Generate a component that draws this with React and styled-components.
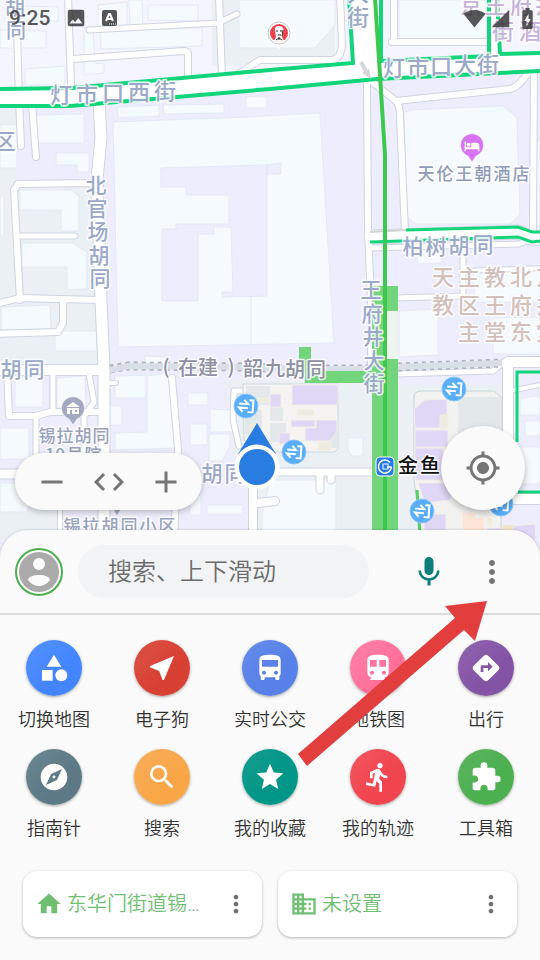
import React from 'react';
import styled, { createGlobalStyle } from 'styled-components';
import {
  MdAdd, MdRemove, MdCode, MdMyLocation, MdMic, MdMoreVert, MdCategory, MdNearMe,
  MdDirectionsBus, MdDirectionsSubway, MdDirections, MdExplore, MdSearch, MdGrade,
  MdDirectionsRun, MdExtension, MdHome, MdDomain, MdImage, MdSignalWifi4Bar,
  MdSignalCellular4Bar, MdBatteryChargingFull, MdHotel,
} from 'react-icons/md';

const GlobalStyle = createGlobalStyle`
  * { box-sizing: border-box; }
  body {
    margin: 0;
    background: #fafafa;
    color: #333;
    font-family: Roboto, "Noto Sans CJK SC", sans-serif;
    font-weight: 350;
  }
  button, input { font: inherit; color: inherit; border: 0; padding: 0; background: none; }
  button { cursor: pointer; }
`;

const Screen = styled.div`
  min-height: 100vh;
  display: flex;
  flex-direction: column;
  overflow: hidden;
`;

const MapArea = styled.section`
  position: relative;
  flex: 1;
  min-height: 320px;
`;

const MapCanvas = styled.svg`
  position: absolute;
  top: 0;
  left: 0;
  width: 100%;
  height: calc(100% + 30px);
`;

const MapText = styled.text`
  font-family: "Noto Sans CJK SC", sans-serif;
  font-weight: 500;
  text-anchor: middle;
  paint-order: stroke;
  stroke: #fff;
  stroke-width: 3px;
  stroke-linejoin: round;
  stroke-opacity: 0.85;
`;

const StatusBar = styled.header`
  position: absolute;
  top: 0;
  left: 0;
  right: 0;
  height: 36px;
  padding: 0 0 0 9px;
  display: flex;
  align-items: center;
  justify-content: space-between;
  color: rgba(50, 50, 50, 0.82);
`;

const StatusGroup = styled.div`
  display: flex;
  align-items: center;
  gap: ${(p) => p.$gap}px;
`;

const Clock = styled.span`
  font-size: 21px;
  font-weight: 500;
`;

const MapControls = styled.div`
  position: absolute;
  left: 15px;
  right: 15px;
  bottom: 20px;
  display: flex;
  justify-content: space-between;
  align-items: flex-end;
`;

const ZoomPill = styled.div`
  display: flex;
  align-items: center;
  justify-content: space-evenly;
  width: 187px;
  height: 57px;
  padding: 0 8px;
  border-radius: 29px;
  background: #fafafa;
  box-shadow: 0 2px 6px rgba(0, 0, 0, 0.25);
`;

const IconButton = styled.button`
  flex: 1;
  display: grid;
  place-items: center;
  color: #757575;
`;

const LocateButton = styled.button`
  display: grid;
  place-items: center;
  width: 84px;
  height: 84px;
  border-radius: 50%;
  background: #fafafa;
  color: #757575;
  box-shadow: 0 3px 7px rgba(0, 0, 0, 0.28);
`;

const Sheet = styled.main`
  position: relative;
  background: #fafafa;
  border-radius: 28px 28px 0 0;
  box-shadow: 0 0 3px rgba(0, 0, 0, 0.2);
`;

const SearchRow = styled.form`
  display: flex;
  align-items: center;
  height: 85px;
  padding: 0 17px 0 15px;
  border-bottom: 2px solid #dcdcdc;
`;

const Avatar = styled.button`
  flex: none;
  display: grid;
  place-items: center;
  width: 48px;
  height: 48px;
  border: 2px solid #4caf50;
  border-radius: 50%;
`;

const SearchInput = styled.input`
  flex: 1;
  min-width: 0;
  height: 53px;
  margin: 0 28px 0 15px;
  padding: 0 30px;
  border-radius: 27px;
  background: #f1f3f4;
  font-size: 24px;
  outline-color: #4caf50;
  &::placeholder { color: #6c6c6c; opacity: 1; }
`;

const ActionButton = styled.button`
  flex: none;
  display: grid;
  place-items: center;
  width: 63px;
  height: 56px;
  color: ${(p) => p.$color};
`;

const ShortcutGrid = styled.nav`
  display: grid;
  grid-template-columns: repeat(5, 1fr);
  row-gap: 14px;
  padding: 25px 0 27px;
`;

const Shortcut = styled.button`
  display: flex;
  flex-direction: column;
  align-items: center;
  gap: 9px;
  color: #333;
  font-size: 18px;
  line-height: 30px;
  white-space: nowrap;
`;

const Badge = styled.span`
  display: grid;
  place-items: center;
  width: 56px;
  height: 56px;
  border-radius: 50%;
  color: #fff;
  background: linear-gradient(135deg, ${(p) => p.$from}, ${(p) => p.$to} 60%);
  box-shadow: 0 1px 3px rgba(0, 0, 0, 0.35);
`;

const Places = styled.div`
  display: grid;
  grid-template-columns: 1fr 1fr;
  gap: 16px;
  padding: 0 23px 23px;
`;

const PlaceCard = styled.div`
  display: flex;
  align-items: center;
  min-width: 0;
  height: 66px;
  padding-left: 12px;
  border-radius: 14px;
  background: #fff;
  box-shadow: 0 1px 3px rgba(0, 0, 0, 0.28);
`;

const PlaceLink = styled.a`
  flex: 1;
  min-width: 0;
  display: flex;
  align-items: center;
  gap: 4px;
  color: #6fbf73;
  font-size: 20px;
  line-height: 30px;
  text-decoration: none;
  svg { flex: none; }
`;

const PlaceName = styled.span`
  width: 136px;
  overflow: hidden;
  text-overflow: ellipsis;
  white-space: nowrap;
`;

const PlaceMenu = styled.button`
  flex: none;
  display: grid;
  place-items: center;
  width: 52px;
  height: 48px;
  color: #6f6f6f;
`;

const Arrow = styled.svg`
  position: absolute;
  top: 70px;
  left: calc(50% + 27px);
  width: 190px;
  height: 167px;
  pointer-events: none;
`;

const roads = [
  ['M17 30L19 100L21 146', 6], ['M32 104L36 157', 6], ['M68 -5L71 84', 6],
  ['M89 30L218 23L237 14', 5], ['M73 59L184 51Q188 51 188 55V80', 6],
  ['M219 -5L222 78', 6], ['M238 74L260 60L333 60Q341 58 342 45L340 -5', 6],
  ['M392 42H487M394 42V-5', 6],
  ['M99 100L101 138L97 180L101 300L104 368V535', 11],
  ['M93 183L18 184L14 190L20 300', 6], ['M20 236H75', 5],
  ['M-5 304L20 298L98 300', 6], ['M63 300V323L58 332L-5 334', 6],
  ['M-5 370H103', 10], ['M7 372L9 416H36L50 412H100', 6],
  ['M53 372V412M89 374L94 402L84 417V455M36 416V455', 5],
  ['M-5 474H104', 9], ['M104 383H116', 4], ['M172 378L178 450L174 540', 6],
  ['M60 505V540', 4],
  ['M367 80L368 230L371 300V380', 6],
  ['M371 81L396 101Q400 105 400 117L405 232', 6],
  ['M396 101L510 89Q519 87 530 70', 6], ['M534 70L533 232', 6],
  ['M371 248L519 244L533 239', 5], ['M396 298L463 296V246', 5], ['M463 271L545 268', 4],
  ['M398 374L493 371L504 362', 5],
  ['M545 362H508V499H545', 10], ['M510 391L545 384', 4],
  ['M258 391H234L233 420L239 446', 5],
  ['M262 472H320L326 472H373M320 475V490M331 475V480', 7],
  ['M253 480V540M258 503L275 501', 8],
  ['M371 237L518 232L532 238H545', 13],
];

const blocks = [
  '24 6 58 7 58 21 24 21', '0 30 46 31 46 48 0 48', '25 69 65 66 65 85 25 85',
  '98 5 127 2 127 26 98 27', '148 5 198 5 198 21 148 20', '129 0 142 0 143 27 130 27',
  '100 31 202 28 202 46 101 49', '84 28 93 31 95 63 104 64 104 73 84 75', '239 0 335 0 335 25 315 48 239 48',
  '36 115 84 114 84 143 36 143', '56 153 89 153 89 172 77 172 77 165 56 165', '0 125 17 125 17 168 0 168',
  '117 107 159 105 159 116 118 118', '163 105 224 104 224 113 164 114', '246 97 267 96 267 108 246 108',
  '113 122 247 117 320 113 334 343 118 347',
  '20 190 71 190 79 196 79 231 61 231 61 210 20 210', '22 243 73 243 87 252 87 289 67 290 67 267 22 267',
  '1 307 50 305 51 329 1 330', '55 331 97 331 97 351 55 351', '0 197 4 197 4 235 0 235', '399 0 487 0 487 38 399 41',
  '404 113 411 110 503 106 517 118 520 214 510 224 415 224 407 216',
  '417 250 442 250 442 263 418 264', '399 311 438 309 438 355 399 357',
  '473 273 540 270 540 302 475 302', '493 318 540 317 540 354 493 354',
  '15 377 43 377 43 407 15 407', '57 378 85 376 86 408 57 408', '0 428 29 428 29 459 0 459',
  '115 376 146 375 146 398 115 398', '147 376 168 373 176 448 115 450 115 433 147 432',
  '108 406 122 406 122 425 109 425', '188 393 208 393 208 405 188 405',
  '210 409 233 410 233 432 210 432', '190 424 207 424 207 445 190 445', '209 434 230 434 230 446 222 461 209 461',
  '207 505 243 505 243 514 207 514', '190 495 201 495 201 515 190 515', '145 356 166 357 166 370 145 370',
  '0 483 28 483 28 512 0 512', '270 480 336 480 336 540 262 540 262 514', '348 438 363 438 363 456 352 456 348 450',
  '520 398 540 396 540 415 520 415', '525 421 540 421 540 436 525 436', '517 447 540 447 540 484 517 484', '535 140 540 140 540 226 535 226',
];

const malls = [
  '292 385 338 385 338 405 292 405', '270 394 281 394 281 407 270 407',
  '291 420 315 420 315 427 291 427', '316 420 337 420 337 431 330 441 305 441 305 428 316 428',
  '279 433 290 433 290 444 279 444', '414 409 425 400 447 399 447 428 415 428',
  '415 430 448 430 448 447 415 447', '415 448 443 448 443 480 415 480',
  '418 483 451 483 451 500 425 503', '424 514 446 514 446 540 424 540',
  '487 528 503 528 503 540 487 540', '513 526 535 524 536 540 513 540',
];

const row = (start, pitch, count) => Array.from({ length: count }, (_, i) => start + pitch * i);

const labels = [
  ['胡同', [15, 16], [8, 31], 20, '#9aa9c9'],
  ['灯市口西街', row(61, 26, 5), row(95, -1, 5), 22, '#9aa9c9'],
  ['区', [5], [141], 21, '#9aa9c9'],
  ['大街', [358, 358], [-7, 17], 22, '#9aa9c9'],
  ['灯市口大街', [394, 418, 441, 465, 488], row(68, -1, 5), 22, '#9aa9c9'],
  ['北官场胡同', row(96, 1, 5), [185, 208, 231, 255, 278], 21, '#9aa9c9'],
  ['柏树胡同', [413, 436, 459, 483], [246, 246, 245, 244], 21, '#9aa9c9'],
  ['王府井大街', [371, 372, 373, 374, 374], [289, 313, 336, 360, 383], 21, '#9aa9c9'],
  ['天伦王朝酒店', row(426, 19, 6), row(174, 0, 6), 17, '#8f9bb9'],
  ['胡同', [11, 34], [369, 369], 21, '#9aa9c9'],
  ['(在建)韶九胡同', [166, 188, 208, 231, 253, 275, 295, 316], [367, 368, 368, 367, 369, 369, 370, 370], 20, '#8d90a3'],
  ['锡拉胡同', row(47, 18, 4), row(436, 0, 4), 17, '#98a2bd'],
  ['10号院', [50, 60, 75, 93], row(455, 0, 4), 17, '#98a2bd'],
  ['锡拉胡同小区', row(72, 19, 6), row(526, 0, 6), 17, '#98a2bd'],
  ['胡同', [212, 235], [473, 473], 21, '#9aa9c9'],
  ['京王府井', row(471, 25, 4), row(5, 0, 4), 22, '#c7b3da'],
  ['街酒店', row(503, 27, 3), row(31, 0, 3), 22, '#c7b3da'],
  ['天主教北京', row(443, 26, 5), row(277, 0, 5), 22, '#d4c0bb'],
  ['教区王府井', row(443, 26, 5), row(305, 0, 5), 22, '#d4c0bb'],
  ['主堂东堂', row(469, 26, 4), row(332, 0, 4), 22, '#d4c0bb'],
  ['金鱼', [408, 430], [466, 466], 20, '#111'],
];

function MapLabel({ label }) {
  const [text, xs, ys, size, color] = label;
  return (
    <MapText fontSize={size} fill={color} x={xs.join(' ')} y={ys.map((y) => y + Math.round(size * 0.36)).join(' ')}>
      {text}
    </MapText>
  );
}

function MetroExit({ x, y }) {
  return (
    <g transform={`translate(${x} ${y})`}>
      <circle r="12" fill="#58aefa" stroke="#8bc6fb" />
      <path d="M-7 -2H2L-2 -6M2 2H-7L-3 6M3 -6H7V6H2" fill="none" stroke="#fff" strokeWidth="2" transform="rotate(4)" />
    </g>
  );
}

function Pin({ x, y, color, children }) {
  return (
    <g transform={`translate(${x} ${y})`}>
      <path d="M0 16L-4 10A11.5 11.5 0 1 1 4 10Z" fill={color} stroke="#fff" strokeOpacity=".6" />
      {children}
    </g>
  );
}

function CityMap() {
  return (
    <MapCanvas viewBox="0 0 540 560" preserveAspectRatio="xMidYMin slice" role="img" aria-label="地图">
      <rect width="540" height="560" fill="#eeedfd" />
      <path d="M0 0H540V54L378 62L270 71L0 89Z" fill="#f4f5fe" />
      <path d="M212 0H240V48H315L335 25V58H260L240 66H212ZM0 110H16V180H0ZM0 180H92L97 366H0ZM225 380H372V540H258L240 460L232 450ZM336 475H372V540H336ZM398 385H503V540H398ZM0 510H60V540H0Z" fill="#ebf0f5" />
      <g fill="#f5faff" stroke="#e3e9f6">{blocks.map((p) => <polygon key={p} points={p} />)}</g>
      <path d="M161 168L267 165V296L222 297V292H228L233 293L231 227H214V234H198V301H162V229H176V224H229V195H186V187H161ZM267 165L281 163V174H267ZM251 297V345" fill="#eeedfd" stroke="#e3e7f6" />

      <g fill="none" stroke="#cfd3e2" strokeLinecap="round" strokeLinejoin="round">
        {roads.map(([d, w]) => <path key={d} d={d} strokeWidth={w + 2} />)}
      </g>
      <g fill="none" stroke="#fff" strokeLinecap="round" strokeLinejoin="round">
        {roads.map(([d, w]) => <path key={d} d={d} strokeWidth={w} />)}
      </g>
      <path d="M0 89L72 88L270 71L351 64L349 0H380L381 62L487 56V0H498L500 54L540 53V71L377 79L270 89L100 106L0 106Z" fill="#fff" />
      <path d="M0 89L72 88L270 70L353 63L349 -2M381 -2V61L489 56V-2M497 -2L500 54L540 53M0 106H70L270 89L377 79L540 71" fill="none" stroke="#12d57b" strokeWidth="4" />
      <path d="M406 230L518 227L532 232H540M370 242L518 237L532 242L540 241M540 372H517V442M518 492H540" fill="none" stroke="#12d57b" strokeWidth="3" />
      <path d="M370 232L406 230" stroke="#d2d2d4" strokeWidth="2" />
      <path d="M361 62L366 71" stroke="#d6d6da" strokeWidth="4" />
      <path d="M362 73L369 69L371 79Z" fill="#d6d6da" />

      <path d="M110 369L128 366L240 367L300 369H372M398 367L502 363" fill="none" stroke="#aeb2bd" strokeWidth="9" strokeDasharray="4 4" />
      <path d="M110 370L128 366L240 367L300 369H372M398 367L502 363" fill="none" stroke="#d9dfe6" strokeWidth="6" />

      <path d="M243 384H338V449L334 452H262L244 440Z" fill="#f5f4f3" stroke="#ccd9df" />
      <path d="M414 398Q414 391 421 391H494L501 397V540H422L414 480Z" fill="#f2f2f1" stroke="#c8d3da" />
      <path d="M458 397H501V500L458 456ZM246 386H270V405H246ZM270 407H283V421H270ZM245 410H262V435H245ZM270 423H286V442H270ZM330 432H338V448H330Z" fill="#e3e8ea" />
      <g fill="#ded7f5" stroke="#f4eeea">{malls.map((p) => <polygon key={p} points={p} />)}</g>
      <path d="M297 410H314V415H297ZM319 442H331V450H319ZM440 415H448V428H440ZM487 518H492V524H487ZM257 398H270V402H257ZM250 424H255V438H250Z" fill="#ecebe2" stroke="#f4eedb" />
      <path d="M463 513H475V518H484V540H463Z" fill="#fde5d8" />
      <path d="M503 525H513V540H503Z" fill="#efe6c5" />

      <path d="M385 311H398V359H385Z" fill="#eef5ee" />
      <path d="M385 286H398V311H385ZM372 286H385V359H398V540H372V383H305V371H372ZM299 347H311V362L306 375L299 362Z" fill="#72d47b" />
      <path d="M417 490L420 535" stroke="#54cf65" strokeWidth="3" />
      <path d="M375 -2L380 75L385 155V540" fill="none" stroke="#3dc950" strokeWidth="4" />

      <Pin x={279} y={33} color="#fff">
        <circle r="11" fill="#fff" stroke="#c8c4c4" /><circle r="9" fill="#ee4149" />
        <path d="M-4 -2Q-5 -7 0 -7Q6 -7 4 0L3 4L5 8Q0 10 -5 8L-3 4Z" fill="#fff" />
        <path d="M-3 -2H-1M1 -2H3M-1 2H2M0 4V7M-3 7L0 5L3 7M4 -3L3 3" stroke="#3a2225" fill="none" />
      </Pin>
      <Pin x={472} y={146} color="#d873f5"><MdHotel x="-8" y="-8" size={16} color="#fff" /></Pin>
      <Pin x={73} y={409} color="#a4a9c2">
        <path d="M-7 -2L0 -7L7 -2ZM-6 -1H6V5H-6Z" fill="#fff" />
        <path d="M-3 5V1H-1V5M2 1H4V3H2Z" fill="#a4a9c2" />
      </Pin>
      <path d="M112 507H122L117 515Z" fill="#a4a9c2" />
      <MetroExit x={246} y={406} />
      <MetroExit x={294} y={452} />
      <MetroExit x={454} y={389} />
      <MetroExit x={422} y={511} />
      <MetroExit x={501} y={504} />
      {labels.map((label) => <MapLabel key={label[0] + label[1][0]} label={label} />)}

      <rect x="376" y="457" width="18" height="19" rx="4" fill="#2379e6" stroke="#fff" />
      <path d="M390 462.5A6.5 6.5 0 1 0 391 469V467H387" fill="none" stroke="#fff" strokeWidth="1.5" />
      <rect x="383" y="464" width="5" height="5" fill="none" stroke="#fff" />

      <path d="M257 423L276 454H238Z" fill="#2a7de0" />
      <circle cx="257" cy="467" r="22.5" fill="#fff" />
      <circle cx="257" cy="467" r="18" fill="#2a7de0" />
    </MapCanvas>
  );
}

const shortcuts = [
  ['切换地图', MdCategory, '#5592ff', '#4285ff'],
  ['电子狗', MdNearMe, '#db5145', '#d94034'],
  ['实时公交', MdDirectionsBus, '#668bea', '#5781e8'],
  ['地铁图', MdDirectionsSubway, '#ff82a6', '#ff7099'],
  ['出行', MdDirections, '#9165ae', '#8353a5'],
  ['指南针', MdExplore, '#6c8792', '#5c7985'],
  ['搜索', MdSearch, '#f9af5b', '#f9a647'],
  ['我的收藏', MdGrade, '#159d8d', '#009688'],
  ['我的轨迹', MdDirectionsRun, '#f3565e', '#f0454f'],
  ['工具箱', MdExtension, '#5cb55f', '#4caf50'],
];

export default function App() {
  return (
    <Screen>
      <GlobalStyle />
      <MapArea>
        <CityMap />
        <StatusBar>
          <StatusGroup $gap={15}>
            <Clock>9:25</Clock>
            <MdImage size={22} />
            <svg width="16" height="16" viewBox="0 0 16 16" aria-hidden="true">
              <rect width="15" height="16" rx="2" fill="currentColor" />
              <path d="M4 11L7 4H8L11 11M5 9H10" fill="none" stroke="#fff" strokeWidth="2" />
              <path d="M7 14H14" stroke="#fff" strokeDasharray="1 1" />
            </svg>
          </StatusGroup>
          <StatusGroup $gap={4}>
            <MdSignalWifi4Bar size={23} />
            <MdSignalCellular4Bar size={21} />
            <MdBatteryChargingFull size={25} />
          </StatusGroup>
        </StatusBar>
        <MapControls>
          <ZoomPill>
            <IconButton aria-label="缩小"><MdRemove size={36} /></IconButton>
            <IconButton aria-label="展开"><MdCode size={36} /></IconButton>
            <IconButton aria-label="放大"><MdAdd size={36} /></IconButton>
          </ZoomPill>
          <LocateButton aria-label="定位"><MdMyLocation size={36} /></LocateButton>
        </MapControls>
      </MapArea>

      <Sheet>
        <SearchRow onSubmit={(e) => e.preventDefault()}>
          <Avatar type="button" aria-label="账号">
            <svg width="42" height="42" viewBox="0 0 42 42" aria-hidden="true">
              <circle cx="21" cy="21" r="20" fill="#aaa" />
              <circle cx="21" cy="13" r="6" fill="#fafafa" />
              <path d="M10 29C10 26 15 24 21 24S32 26 32 29C29 33 25 35 21 35S13 33 10 29Z" fill="#fafafa" />
            </svg>
          </Avatar>
          <SearchInput type="search" aria-label="搜索" placeholder="搜索、上下滑动" />
          <ActionButton type="button" aria-label="语音" $color="#0b7d7a"><MdMic size={36} /></ActionButton>
          <ActionButton type="button" aria-label="更多" $color="#757575"><MdMoreVert size={36} /></ActionButton>
        </SearchRow>
        <ShortcutGrid>
          {shortcuts.map(([name, Icon, from, to]) => (
            <Shortcut key={name}>
              <Badge $from={from} $to={to}><Icon size={32} /></Badge>
              {name}
            </Shortcut>
          ))}
        </ShortcutGrid>
        <Places>
          <PlaceCard>
            <PlaceLink href="#home"><MdHome size={28} /><PlaceName>东华门街道锡拉胡同</PlaceName></PlaceLink>
            <PlaceMenu aria-label="家的选项"><MdMoreVert size={28} /></PlaceMenu>
          </PlaceCard>
          <PlaceCard>
            <PlaceLink href="#work"><MdDomain size={28} /><PlaceName>未设置</PlaceName></PlaceLink>
            <PlaceMenu aria-label="公司的选项"><MdMoreVert size={28} /></PlaceMenu>
          </PlaceCard>
        </Places>
        <Arrow viewBox="297 600 190 167" aria-hidden="true">
          <path d="M298 754L455 618L445 606L487 601L475 641L464 630L307 766Z" fill="#e33e3e" />
        </Arrow>
      </Sheet>
    </Screen>
  );
}
